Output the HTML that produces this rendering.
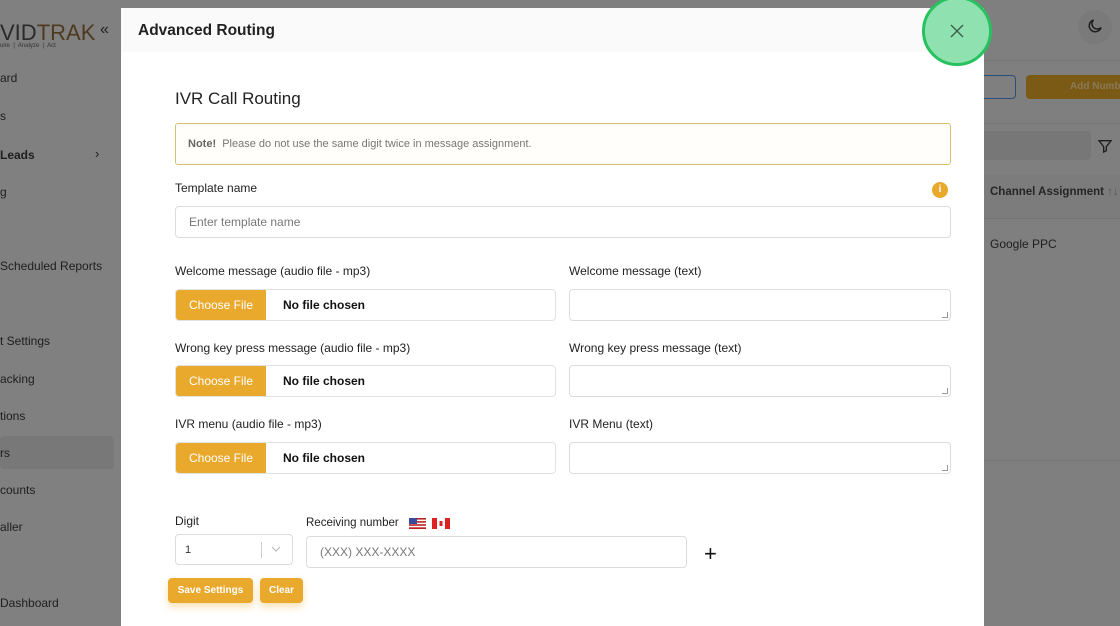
<!DOCTYPE html>
<html><head><style>
*{box-sizing:border-box;margin:0;padding:0}
html,body{width:1120px;height:626px;overflow:hidden}
body{background:#7f7f7f;font-family:"Liberation Sans",sans-serif;position:relative;color:#222}
.a{position:absolute}
.sb{color:#1e1e1e;font-size:12px}
.modal{position:absolute;left:121px;top:8px;width:863px;height:618px;background:#fff;overflow:hidden}
.hdr{height:44px;background:#fafafa;padding:14px 17px;font-weight:bold;font-size:15.5px;color:#222}
.lbl{position:absolute;font-size:12px;color:#222}
.inp{position:absolute;border:1px solid #dcdcdc;border-radius:4px;background:#fff}
.file{position:absolute;border:1px solid #e2e2e2;border-radius:4px;width:381px;height:32px;overflow:hidden;font-size:12px}
.file .b{position:absolute;left:0;top:0;width:90px;height:100%;background:#e9a92d;color:#fff;text-align:center;line-height:30px}
.file .t{position:absolute;left:107px;top:0;line-height:30px;font-weight:bold;color:#111}
.btn{position:absolute;background:#e9a92d;color:#fff;font-weight:bold;font-size:10px;border-radius:4px;text-align:center;line-height:25px;box-shadow:0 4px 8px rgba(233,169,45,.35)}
.rs{position:absolute;right:2px;bottom:2px;width:6px;height:6px;border-right:1px solid #999;border-bottom:1px solid #999;transform:skew(0)}
</style></head><body>
<div class="a" style="left:0;top:0;width:121px;height:626px;background:#808080"></div>
<div class="a" style="left:0;top:20px;font-size:22px;color:#2a2a2a">VID<span style="color:#4e3a1f">TRAK</span></div>
<div class="a" style="left:0;top:43px;font-size:6px;color:#333">uire &nbsp;|&nbsp; Analyze &nbsp;|&nbsp; Act</div>
<div class="a" style="left:100px;top:21px;font-size:16px;color:#222">«</div>
<div class="a sb" style="left:0;top:71px">ard</div>
<div class="a sb" style="left:0;top:109px">s</div>
<div class="a sb" style="left:0;top:148px;font-weight:bold">Leads</div>
<div class="a sb" style="left:95px;top:146px;font-size:13px">›</div>
<div class="a sb" style="left:0;top:185px">g</div>
<div class="a sb" style="left:0;top:259px">Scheduled Reports</div>
<div class="a sb" style="left:0;top:334px">t Settings</div>
<div class="a sb" style="left:0;top:372px">acking</div>
<div class="a sb" style="left:0;top:409px">tions</div>
<div class="a" style="left:0;top:436px;width:114px;height:33px;background:#787878;border-radius:4px"></div>
<div class="a sb" style="left:0;top:446px">rs</div>
<div class="a sb" style="left:0;top:483px">counts</div>
<div class="a sb" style="left:0;top:520px">aller</div>
<div class="a sb" style="left:0;top:596px">Dashboard</div>
<div class="a" style="left:984px;top:60px;width:136px;height:1px;background:#747474"></div>
<div class="a" style="left:1078px;top:10px;width:34px;height:34px;border-radius:50%;background:#7a7a7a"></div>
<svg class="a" style="left:1086px;top:17px" width="18" height="18" viewBox="0 0 24 24"><path d="M20 14A8 8 0 1 1 10 4a6 6 0 0 0 10 10z" fill="none" stroke="#1e1e1e" stroke-width="2"/></svg>
<div class="a" style="left:970px;top:75px;width:46px;height:24px;border:1.5px solid #2a4f78;border-radius:4px"></div>
<div class="a" style="left:1026px;top:75px;width:100px;height:24px;background:#7a5a14;border-radius:4px;color:#8a7a5a;font-weight:bold;font-size:10px;line-height:24px;padding-left:44px">Add Numb</div>
<div class="a" style="left:984px;top:123px;width:136px;height:1px;background:#747474"></div>
<div class="a" style="left:970px;top:131px;width:121px;height:29px;background:#777;border-radius:4px"></div>
<svg class="a" style="left:1097px;top:138px" width="16" height="16" viewBox="0 0 24 24"><path d="M3 4h18l-7 9v6l-4 2v-8z" fill="none" stroke="#1e1e1e" stroke-width="2"/></svg>
<div class="a" style="left:984px;top:175px;width:136px;height:43px;background:#7c7c7c"></div>
<div class="a" style="left:990px;top:186px;font-size:11.5px;font-weight:bold;color:#262626">Channel Assignment <span style="color:#555;font-weight:normal">↑↓</span></div>
<div class="a" style="left:984px;top:218px;width:136px;height:1px;background:#747474"></div>
<div class="a" style="left:990px;top:237px;font-size:12px;color:#1e1e1e">Google PPC</div>
<div class="a" style="left:984px;top:460px;width:136px;height:1px;background:#747474"></div>
<div class="modal">
<div class="hdr">Advanced Routing</div>
<div class="a" style="left:54px;top:81px;font-size:17px;color:#222">IVR Call Routing</div>
<div class="a" style="left:54px;top:115px;width:776px;height:42px;border:1px solid #d9bf6e;border-radius:3px;background:#fffefa;font-size:11px;color:#777;padding:14px 12px"><b style="color:#666">Note!</b>&nbsp; Please do not use the same digit twice in message assignment.</div>
<div class="lbl" style="left:54px;top:173px">Template name</div>
<div class="a" style="left:811px;top:174px;width:16px;height:16px;border-radius:50%;background:#e9a92d;color:#fff;font-size:10px;font-weight:bold;text-align:center;line-height:16px">i</div>
<div class="inp" style="left:54px;top:198px;width:776px;height:32px;font-size:12px;color:#777;padding:8px 13px">Enter template name</div>
<div class="lbl" style="left:54px;top:256px">Welcome message (audio file - mp3)</div>
<div class="lbl" style="left:448px;top:256px">Welcome message (text)</div>
<div class="file" style="left:54px;top:281px"><div class="b">Choose File</div><div class="t">No file chosen</div></div>
<div class="inp" style="left:448px;top:281px;width:382px;height:32px"><div class="rs"></div></div>
<div class="lbl" style="left:54px;top:333px">Wrong key press message (audio file - mp3)</div>
<div class="lbl" style="left:448px;top:333px">Wrong key press message (text)</div>
<div class="file" style="left:54px;top:357px"><div class="b">Choose File</div><div class="t">No file chosen</div></div>
<div class="inp" style="left:448px;top:357px;width:382px;height:32px"><div class="rs"></div></div>
<div class="lbl" style="left:54px;top:409px">IVR menu (audio file - mp3)</div>
<div class="lbl" style="left:448px;top:409px">IVR Menu (text)</div>
<div class="file" style="left:54px;top:434px"><div class="b">Choose File</div><div class="t">No file chosen</div></div>
<div class="inp" style="left:448px;top:434px;width:382px;height:32px"><div class="rs"></div></div>
<div class="lbl" style="left:54px;top:506px">Digit</div>
<div class="inp" style="left:54px;top:526px;width:118px;height:31px;font-size:11px;color:#333;padding:9px 9px">1</div>
<div class="a" style="left:140px;top:534px;width:1px;height:16px;background:#ccc"></div>
<svg class="a" style="left:150px;top:537px" width="10" height="8" viewBox="0 0 10 8"><path d="M1 2l4 4 4-4" fill="none" stroke="#bbb" stroke-width="1.2"/></svg>
<div class="lbl" style="left:185px;top:509px;font-size:11.5px">Receiving number</div>
<svg class="a" style="left:288px;top:510px" width="17" height="11"><rect width="17" height="11" fill="#b22"/><rect y="1.6" width="17" height="1.5" fill="#fff"/><rect y="4.7" width="17" height="1.5" fill="#fff"/><rect y="7.8" width="17" height="1.5" fill="#fff"/><rect width="8" height="6" fill="#3a4a9a"/></svg>
<svg class="a" style="left:311px;top:510px" width="18" height="11"><rect width="18" height="11" fill="#fff"/><rect width="5" height="11" fill="#d22"/><rect x="13" width="5" height="11" fill="#d22"/><rect x="7.5" y="3" width="3" height="5" fill="#d22"/></svg>
<div class="inp" style="left:185px;top:528px;width:381px;height:32px;font-size:12px;color:#777;padding:8px 13px">(XXX) XXX-XXXX</div>
<div class="a" style="left:583px;top:533px;font-size:22px;color:#111">+</div>
<div class="btn" style="left:47px;top:570px;width:85px">Save Settings</div>
<div class="btn" style="left:139px;top:570px;width:43px">Clear</div>
</div>
<div class="a" style="left:922px;top:-4px;width:70px;height:70px;border-radius:50%;background:#8fe2b0;border:3px solid #27c25f"></div>
<svg class="a" style="left:950px;top:24px" width="14" height="14" viewBox="0 0 14 14"><path d="M1 1l12 12M13 1L1 13" stroke="#3c5a48" stroke-width="1.3"/></svg>
</body></html>
